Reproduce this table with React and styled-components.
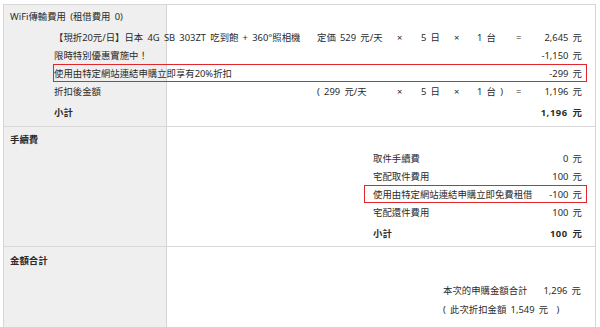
import React from "react";
import styled, { createGlobalStyle } from "styled-components";

const GlobalStyle = createGlobalStyle`
  body {
    margin: 0;
    background: #fff;
    color: #2b2b2b;
    font-family: "Noto Sans", "Noto Sans CJK TC", sans-serif;
    font-size: 9.4px;
    word-spacing: 1.8px;
  }
`;

const rentalRows = [
  {
    label: "【現折20元/日】日本 4G SB 303ZT 吃到飽 + 360°照相機",
    price: "定価 529 元/天",
    days: "5 日",
    units: "1 台",
    amount: "2,645 元",
  },
  { label: "限時特別優惠實施中！", amount: "-1,150 元" },
  { label: "使用由特定網站連結申購立即享有20%折扣", amount: "-299 元", highlight: true },
  {
    label: "折扣後金額",
    price: "( 299 元/天",
    days: "5 日",
    units: "1 台 )",
    amount: "1,196 元",
  },
];

const feeRows = [
  { label: "取件手續費", amount: "0 元" },
  { label: "宅配取件費用", amount: "100 元" },
  { label: "使用由特定網站連結申購立即免費租借", amount: "-100 元", highlight: true },
  { label: "宅配還件費用", amount: "100 元" },
];

const App = () => {
  return (
    <Page>
      <GlobalStyle />
      <Frame>
        <Section $pad="3px 0 5px">
          <SectionLabel>WiFi傳輸費用 (租借費用 0)</SectionLabel>
          <RentalList>
            {rentalRows.map((row) => (
              <RentalRow key={row.label} $highlight={row.highlight}>
                <span>{row.label}</span>
                <span>{row.price}</span>
                <span>{row.price && "×"}</span>
                <span>{row.days}</span>
                <span>{row.price && "×"}</span>
                <span>{row.units}</span>
                <span>{row.price && "="}</span>
                <Amount>{row.amount}</Amount>
              </RentalRow>
            ))}
            <RentalRow $total>
              <span>小計</span>
              <span />
              <span />
              <span />
              <span />
              <span />
              <span />
              <Amount $strong>1,196 元</Amount>
            </RentalRow>
          </RentalList>
        </Section>

        <Section $pad="4px 0 4px">
          <SectionLabel $bold>手續費</SectionLabel>
          <FeeList>
            {feeRows.map((row) => (
              <FeeRow key={row.label} $highlight={row.highlight}>
                <span>{row.label}</span>
                <Amount>{row.amount}</Amount>
              </FeeRow>
            ))}
            <FeeRow $total>
              <span>小計</span>
              <Amount $strong>100 元</Amount>
            </FeeRow>
          </FeeList>
        </Section>

        <Section $pad="5px 0 10px">
          <SectionLabel $bold>金額合計</SectionLabel>
          <TotalBlock>
            <TotalRow>
              <span>本次的申購金額合計</span>
              <span>1,296 元</span>
            </TotalRow>
            <TotalNote>( 此次折扣金額 1,549 元 &nbsp;)</TotalNote>
          </TotalBlock>
        </Section>
      </Frame>
    </Page>
  );
};

export default App;

const Page = styled.div`
  padding: 4px 4px 0 3px;
`;

const Frame = styled.div`
  border: 1px solid #d6d6d6;
  border-bottom: none;
`;

const Section = styled.section`
  padding: ${(p) => p.$pad};
  background: linear-gradient(
    to right,
    #efefef 162px,
    #d4d4d4 162px,
    #d4d4d4 163px,
    #fff 163px
  );
  & + & {
    border-top: 1px solid #d8d8d8;
  }
`;

const SectionLabel = styled.div`
  width: 156px;
  padding-left: 6px;
  line-height: 18px;
  font-weight: ${(p) => (p.$bold ? 700 : 400)};
`;

const Amount = styled.span`
  text-align: right;
  white-space: nowrap;
  letter-spacing: ${(p) => (p.$strong ? "0.6px" : "normal")};
  margin-right: ${(p) => (p.$strong ? "-0.6px" : "0")};
`;

const RentalList = styled.div`
  margin: 2px 8px 0 49px;
`;

const RentalRow = styled.div`
  display: grid;
  grid-template-columns: 263px 80px 24px 33px 23px 39px 14px 1fr;
  align-items: center;
  box-sizing: border-box;
  height: 18px;
  padding-right: 4px;
  border: 1px solid ${(p) => (p.$highlight ? "#e3262c" : "transparent")};
  white-space: nowrap;
  margin-top: ${(p) => (p.$total ? "3px" : "0")};
  font-weight: ${(p) => (p.$total ? 700 : 400)};
`;

const FeeList = styled.div`
  width: 223px;
  margin: 0 8px 0 auto;
`;

const FeeRow = styled.div`
  display: grid;
  grid-template-columns: 1fr auto;
  align-items: center;
  box-sizing: border-box;
  height: 18px;
  padding: 0 4px 0 8px;
  border: 1px solid ${(p) => (p.$highlight ? "#e3262c" : "transparent")};
  white-space: nowrap;
  margin-top: ${(p) => (p.$total ? "3px" : "0")};
  font-weight: ${(p) => (p.$total ? 700 : 400)};
`;

const TotalBlock = styled.div`
  width: 138px;
  margin: 11px 14px 0 auto;
`;

const TotalRow = styled.div`
  display: flex;
  justify-content: space-between;
  line-height: 19px;
  white-space: nowrap;
`;

const TotalNote = styled.div`
  line-height: 19px;
  white-space: nowrap;
`;
